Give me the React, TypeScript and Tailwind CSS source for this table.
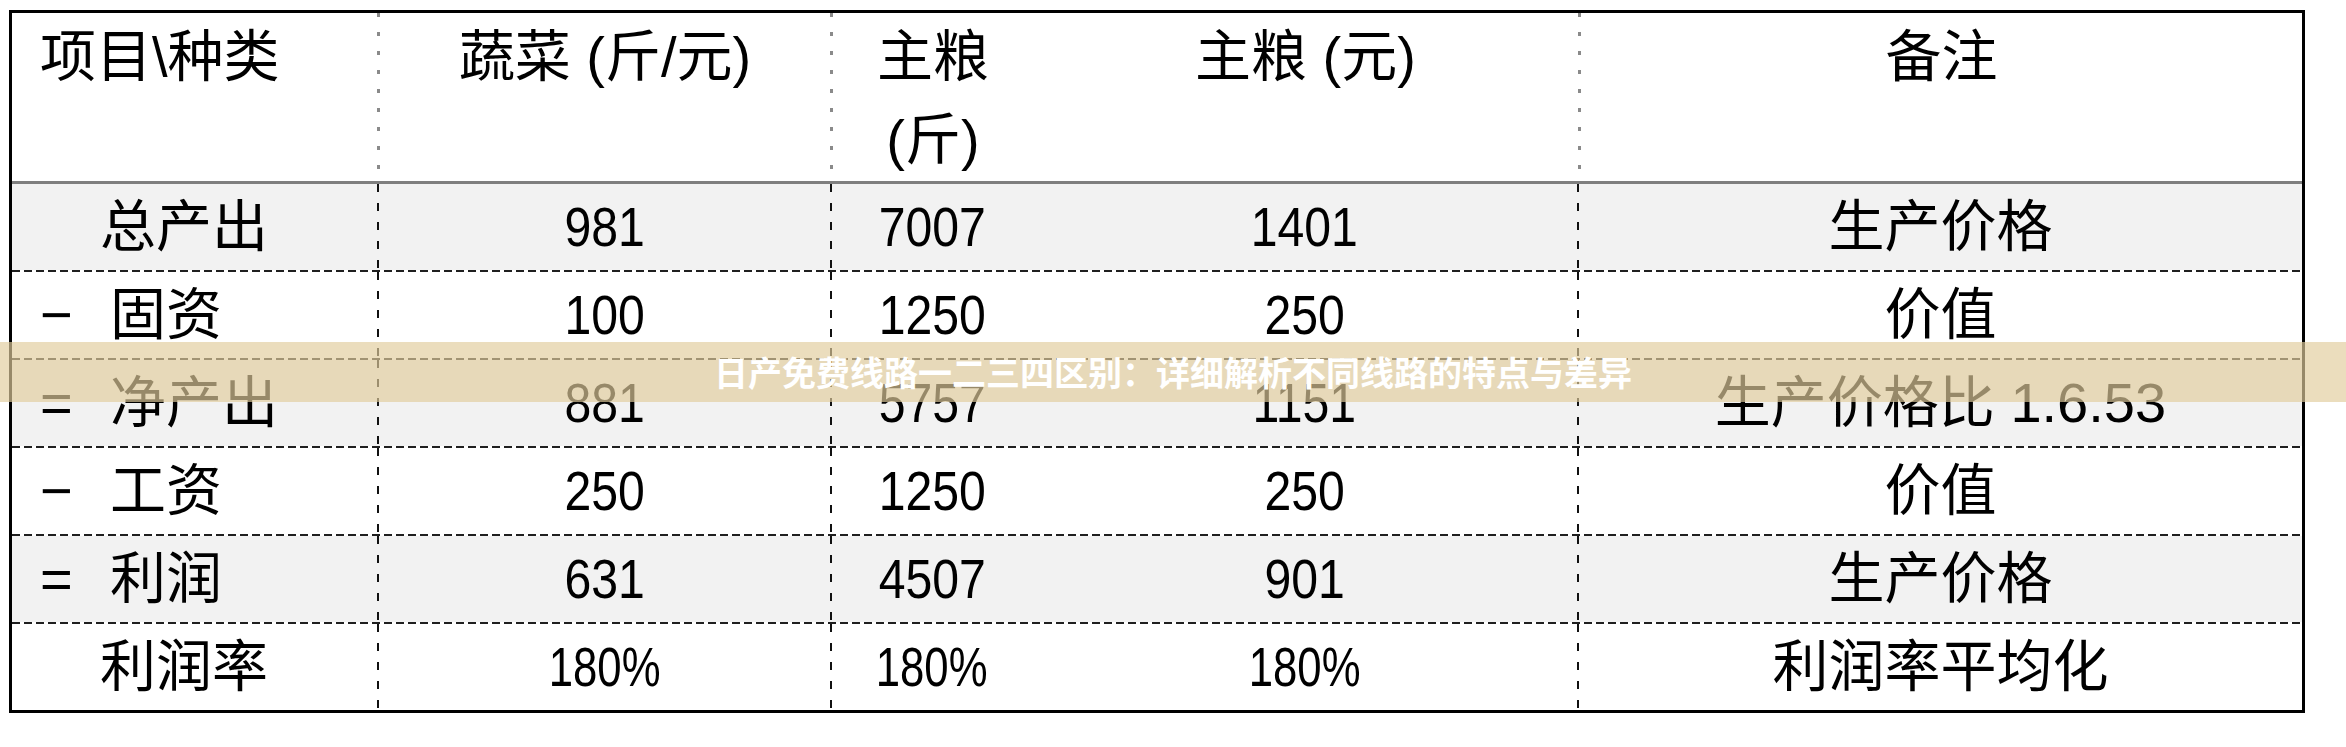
import React from 'react'

type Row = {
  sign: string
  label: string
  veg: string
  grainJin: string
  grainYuan: string
  note: string
  shaded?: boolean
}

const rows: Row[] = [
  { sign: '', label: '总产出', veg: '981', grainJin: '7007', grainYuan: '1401', note: '生产价格', shaded: true },
  { sign: '−', label: '固资', veg: '100', grainJin: '1250', grainYuan: '250', note: '价值' },
  { sign: '=', label: '净产出', veg: '881', grainJin: '5757', grainYuan: '1151', note: '生产价格比 1.6.53', shaded: true },
  { sign: '−', label: '工资', veg: '250', grainJin: '1250', grainYuan: '250', note: '价值' },
  { sign: '=', label: '利润', veg: '631', grainJin: '4507', grainYuan: '901', note: '生产价格', shaded: true },
  { sign: '', label: '利润率', veg: '180%', grainJin: '180%', grainYuan: '180%', note: '利润率平均化' },
]

function DotLine() {
  return (
    <div className="w-[3px] shrink-0 self-stretch bg-[image:repeating-linear-gradient(to_bottom,#8a8a8a_0_4px,transparent_4px_19px)]" />
  )
}

function DashLine() {
  return (
    <div className="w-[2px] shrink-0 self-stretch bg-[image:repeating-linear-gradient(to_bottom,#111_0_8px,transparent_8px_19px)]" />
  )
}

function RowRule() {
  return (
    <div className="h-[2px] w-full bg-[image:repeating-linear-gradient(to_right,#1f1f1f_0_8px,transparent_8px_12px)]" />
  )
}

// narrow figures, like the condensed face in the sheet
function Num({ value }: { value: string }) {
  const pct = value.endsWith('%')
  return (
    <span className={`inline-block ${pct ? 'scale-x-[0.78]' : 'scale-x-[0.86]'}`}>{value}</span>
  )
}

export default function App() {
  return (
    <div className="relative w-[2346px] h-[747px] bg-white overflow-hidden font-['Liberation_Sans','Noto_Sans_CJK_SC',sans-serif] text-black text-[56px]">
      <div className="ml-[9px] mt-[10px] w-[2296px] border-[3px] border-black">
        {/* Header */}
        <div className="flex h-[168px] leading-[83px]">
          <div className="w-[365px] pl-[28px] pt-[2px]">{'项目\\种类'}</div>
          <DotLine />
          <div className="w-[450px] text-center pt-[2px]">蔬菜&nbsp;(斤/元)</div>
          <DotLine />
          <div className="w-[200px] text-center pt-[2px]">
            主粮
            <br />
            (斤)
          </div>
          <div className="w-[545px] text-center pt-[2px]">主粮 (元)</div>
          <DotLine />
          <div className="flex-1 text-center pt-[2px]">备注</div>
        </div>
        <div className="h-[3px] bg-[#7f7f7f]" />

        {/* Body */}
        {rows.map((r, i) => (
          <React.Fragment key={r.label}>
            {i > 0 && <RowRule />}
            <div className={`flex h-[86px] items-center ${r.shaded ? 'bg-[#f2f2f2]' : 'bg-white'}`}>
              <div className="w-[365px] flex items-center">
                {r.sign ? (
                  <>
                    <span className="w-[98px] pl-[28px]">{r.sign}</span>
                    <span>{r.label}</span>
                  </>
                ) : (
                  <span className="pl-[88px]">{r.label}</span>
                )}
              </div>
              <DashLine />
              <div className="w-[451px] text-center"><Num value={r.veg} /></div>
              <DashLine />
              <div className="w-[200px] text-center"><Num value={r.grainJin} /></div>
              <div className="w-[545px] text-center"><Num value={r.grainYuan} /></div>
              <DashLine />
              <div className="flex-1 text-center">{r.note}</div>
            </div>
          </React.Fragment>
        ))}
      </div>

      {/* Watermark banner */}
      <div className="absolute left-0 top-[342px] w-full h-[60px] bg-[rgba(225,205,157,0.67)] flex items-center justify-center">
        <span className="text-white font-bold text-[34px] leading-none font-['Noto_Sans_CJK_SC',sans-serif]">
          日产免费线路一二三四区别：详细解析不同线路的特点与差异
        </span>
      </div>
    </div>
  )
}
